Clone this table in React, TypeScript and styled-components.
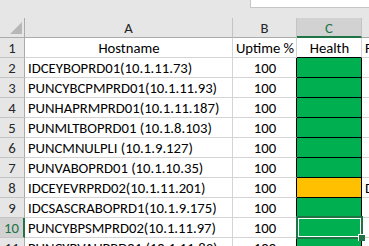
import React from 'react';
import styled, { createGlobalStyle } from 'styled-components';

const GlobalStyle = createGlobalStyle`
  html, body {
    margin: 0;
    padding: 0;
    background: #ffffff;
  }
`;

const GREEN = '#217346';
const GRID = '#d4d4d4';

const Page = styled.div`
  width: 369px;
  height: 246px;
  overflow: hidden;
  background-color: #e6e6e6;
  display: flex;
  flex-direction: column;
  font-family: Calibri, Carlito, 'Liberation Sans', Arial, sans-serif;
  font-size: 14.7px;
  color: #000;
`;

const TopStrip = styled.div`
  height: 18px;
  flex-shrink: 0;
  display: flex;
  justify-content: flex-end;
  align-items: flex-start;
`;

const FormulaBox = styled.div`
  width: 118px;
  height: 7px;
  background: #ffffff;
  border: 1px solid #c6c6c6;
  border-top: none;
  border-right: none;
`;

const Sheet = styled.div`
  position: relative;
  display: grid;
  grid-template-columns: 25px 208px 64px 65px 80px;
  grid-auto-rows: 20px;
  background: #ffffff;
`;

const Corner = styled.div`
  position: relative;
  background: #e6e6e6;
  border-right: 1px solid #ababab;
  border-bottom: 1px solid #ababab;
  box-sizing: border-box;
  &::after {
    content: '';
    position: absolute;
    right: 2px;
    bottom: 3px;
    width: 0;
    height: 0;
    border-left: 12px solid transparent;
    border-bottom: 12px solid #b7b7b7;
  }
`;

const ColHead = styled.div<{ $active?: boolean }>`
  box-sizing: border-box;
  display: flex;
  align-items: center;
  justify-content: center;
  padding-top: 1px;
  background: ${(p) => (p.$active ? '#d2d2d2' : '#e6e6e6')};
  color: ${(p) => (p.$active ? GREEN : '#262626')};
  border-right: 1px solid #c4c4c4;
  border-bottom: ${(p) => (p.$active ? `2px solid ${GREEN}` : '1px solid #ababab')};
`;

const RowHead = styled.div<{ $active?: boolean }>`
  box-sizing: border-box;
  display: flex;
  align-items: center;
  justify-content: center;
  padding-top: 1px;
  background: ${(p) => (p.$active ? '#d2d2d2' : '#e6e6e6')};
  color: ${(p) => (p.$active ? GREEN : '#262626')};
  border-right: ${(p) => (p.$active ? `2px solid ${GREEN}` : '1px solid #ababab')};
  border-bottom: 1px solid #c4c4c4;
`;

const Cell = styled.div<{
  $align?: 'left' | 'center';
  $fill?: string;
  $right?: string;
  $bottom?: string;
}>`
  box-sizing: border-box;
  display: flex;
  align-items: center;
  justify-content: ${(p) => (p.$align === 'center' ? 'center' : 'flex-start')};
  padding: 1px 2px 0 3px;
  white-space: nowrap;
  overflow: visible;
  background: ${(p) => p.$fill || '#ffffff'};
  border-right: 1px solid ${(p) => p.$right || GRID};
  border-bottom: 1px solid ${(p) => p.$bottom || GRID};
  position: relative;
  z-index: ${(p) => (p.$align === 'center' ? 1 : 0)};
`;

const Selection = styled.div`
  position: absolute;
  left: 296px;
  top: 198px;
  width: 67px;
  height: 23px;
  box-sizing: border-box;
  border: 2px solid ${GREEN};
  box-shadow: inset 0 0 0 1px #ffffff;
  z-index: 3;
`;

const FillHandle = styled.div`
  position: absolute;
  right: -4px;
  bottom: -4px;
  width: 6px;
  height: 6px;
  background: ${GREEN};
  border-left: 1px solid #ffffff;
  border-top: 1px solid #ffffff;
`;

type Row = { host: string; uptime: string; health: 'ok' | 'warn'; note?: string };

const rows: Row[] = [
  { host: 'IDCEYBOPRD01(10.1.11.73)', uptime: '100', health: 'ok' },
  { host: 'PUNCYBCPMPRD01(10.1.11.93)', uptime: '100', health: 'ok' },
  { host: 'PUNHAPRMPRD01(10.1.11.187)', uptime: '100', health: 'ok' },
  { host: 'PUNMLTBOPRD01 (10.1.8.103)', uptime: '100', health: 'ok' },
  { host: 'PUNCMNULPLI (10.1.9.127)', uptime: '100', health: 'ok' },
  { host: 'PUNVABOPRD01 (10.1.10.35)', uptime: '100', health: 'ok' },
  { host: 'IDCEYEVRPRD02(10.1.11.201)', uptime: '100', health: 'warn', note: 'Disk usage high' },
  { host: 'IDCSASCRABOPRD1(10.1.9.175)', uptime: '100', health: 'ok' },
  { host: 'PUNCYBPSMPRD02(10.1.11.97)', uptime: '100', health: 'ok' },
  { host: 'PUNCYBVAHPRD01 (10.1.11.83)', uptime: '100', health: 'ok' },
];

const fills = { ok: '#00b050', warn: '#ffc000' };

export default function App() {
  return (
    <Page>
      <GlobalStyle />
      <TopStrip>
        <FormulaBox />
      </TopStrip>
      <Sheet>
        <Corner />
        <ColHead>A</ColHead>
        <ColHead>B</ColHead>
        <ColHead $active>C</ColHead>
        <ColHead>D</ColHead>

        <RowHead>1</RowHead>
        <Cell $align="center">Hostname</Cell>
        <Cell $align="center">Uptime %</Cell>
        <Cell $align="center" $bottom="#000">Health</Cell>
        <Cell>Findings</Cell>

        {rows.map((r, i) => (
          <React.Fragment key={r.host}>
            <RowHead $active={i + 2 === 10}>{i + 2}</RowHead>
            <Cell>{r.host}</Cell>
            <Cell $align="center" $right="#000">{r.uptime}</Cell>
            <Cell $fill={fills[r.health]} $right="#000" $bottom="#000" />
            <Cell>{r.note}</Cell>
          </React.Fragment>
        ))}

        <Selection>
          <FillHandle />
        </Selection>
      </Sheet>
    </Page>
  );
}
